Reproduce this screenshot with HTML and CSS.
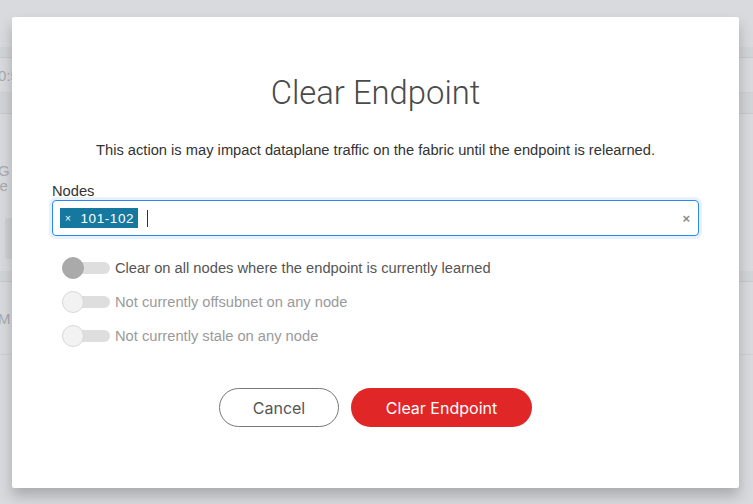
FILE: index.html
```html
<!DOCTYPE html>
<html>
<head>
<meta charset="utf-8">
<link rel="stylesheet" href="styles.css">
</head>
<body>
<div class="page">
  <div class="bg-band top"></div>
  <div class="bg-row r1"><span class="bg-text">0:5</span></div>
  <div class="bg-band"></div>
  <div class="bg-area">
    <span class="bg-text g">G</span>
    <span class="bg-text ce">ce</span>
    <span class="bg-block"></span>
  </div>
  <div class="bg-band"></div>
  <div class="bg-row r2"><span class="bg-text">M</span></div>
</div>

<div class="modal">
  <h1 class="title">Clear Endpoint</h1>
  <p class="subtitle">This action is may impact dataplane traffic on the fabric until the endpoint is relearned.</p>
  <label class="field-label">Nodes</label>
  <div class="select">
    <span class="tag"><span class="tag-x">×</span>101-102</span>
    <span class="cursor"></span>
    <span class="clear">×</span>
  </div>
  <div class="toggles">
    <div class="toggle-row">
      <span class="switch"><span class="knob dark"></span></span>
      <span class="toggle-label">Clear on all nodes where the endpoint is currently learned</span>
    </div>
    <div class="toggle-row disabled">
      <span class="switch"><span class="knob"></span></span>
      <span class="toggle-label">Not currently offsubnet on any node</span>
    </div>
    <div class="toggle-row disabled">
      <span class="switch"><span class="knob"></span></span>
      <span class="toggle-label">Not currently stale on any node</span>
    </div>
  </div>
  <div class="actions">
    <button class="btn btn-cancel">Cancel</button>
    <button class="btn btn-primary">Clear Endpoint</button>
  </div>
</div>
</body>
</html>
```

FILE: styles.css
```css
* { box-sizing: border-box; }
html, body { margin: 0; padding: 0; }
body {
  width: 753px;
  height: 504px;
  overflow: hidden;
  background: #d9dadd;
  font-family: "Liberation Sans", Arial, sans-serif;
  position: relative;
}
.page {
  display: flex;
  flex-direction: column;
  padding-top: 47px;
}
.bg-band {
  height: 11px;
  background: #d3d4d7;
  border-bottom: 1px solid #c9cacd;
}
.bg-row {
  height: 35px;
  display: flex;
  align-items: center;
  color: #a9abaf;
  font-size: 15px;
  border-bottom: 1px solid #cfd0d3;
}
.bg-area {
  height: 157px;
  position: relative;
  color: #a9abaf;
  font-size: 15px;
}
.bg-band:nth-of-type(3) { height: 21px; }
.bg-row.r2 { height: 73px; }
.bg-text { margin-left: -2px; }
.bg-area .g { position: absolute; left: 0; top: 48px; }
.bg-area .ce { position: absolute; left: -6px; top: 63px; }
.bg-block {
  position: absolute;
  left: 5px; top: 104px;
  width: 20px; height: 41px;
  background: #cfd0d3;
  border-radius: 2px;
}

.modal {
  position: absolute;
  left: 12px;
  top: 17px;
  width: 727px;
  height: 471px;
  background: #fff;
  border-radius: 2px;
  box-shadow: 0 8px 14px rgba(0,0,0,0.22);
  padding: 0 40px;
  display: flex;
  flex-direction: column;
}
.title {
  margin: 57px 0 0;
  text-align: center;
  font-family: Roboto, sans-serif;
  font-weight: 300;
  font-size: 32.8px;
  line-height: 38px;
  color: #4a4a4a;
}
.subtitle {
  margin: 29px 0 0;
  text-align: center;
  font-size: 14.7px;
  line-height: 18px;
  color: #333;
}
.field-label {
  margin-top: 23px;
  font-size: 14.7px;
  line-height: 18px;
  color: #333;
}
.select {
  margin-top: 0;
  height: 36px;
  border: 1px solid #2b86f0;
  border-radius: 4px;
  box-shadow: 0 0 0 3px #e8f2fe;
  display: flex;
  align-items: center;
  padding: 0 8px 0 7px;
}
.tag {
  background: #15799f;
  color: #fff;
  height: 20px;
  display: inline-flex;
  align-items: center;
  font-size: 13.5px;
  letter-spacing: 0.6px;
  padding: 0 4px 0 5px;
}
.tag-x {
  font-size: 10px;
  margin-right: 9px;
}
.cursor {
  width: 1px;
  height: 17px;
  background: #333;
  margin-left: 9px;
}
.clear {
  margin-left: auto;
  color: #8c8c8c;
  font-size: 13px;
  font-weight: 700;
}
.toggles {
  margin-top: 21px;
  padding-left: 10px;
  display: flex;
  flex-direction: column;
  gap: 12px;
}
.toggle-row {
  display: flex;
  align-items: center;
  height: 22px;
}
.switch {
  position: relative;
  width: 48px;
  height: 12px;
  background: #dedede;
  border-radius: 6px;
  margin-right: 5px;
}
.knob {
  position: absolute;
  left: 0; top: -5px;
  width: 22px; height: 22px;
  border-radius: 50%;
  background: #f2f2f2;
  border: 1px solid #d9d9d9;
}
.knob.dark {
  background: #aaaaaa;
  border-color: #aaaaaa;
}
.toggle-label {
  font-size: 14.7px;
  color: #555;
}
.toggle-row.disabled .toggle-label { color: #9a9a9a; }
.actions {
  margin-top: 41px;
  display: flex;
  justify-content: center;
  gap: 12px;
}
.btn {
  font-family: Inter, Roboto, sans-serif;
  font-size: 16px;
  height: 39px;
  border-radius: 20px;
  cursor: pointer;
}
.btn-cancel {
  width: 120px;
  background: #fff;
  border: 1px solid #777;
  color: #555;
}
.btn-primary {
  width: 181px;
  background: #e02626;
  border: none;
  color: #fff;
}
```
